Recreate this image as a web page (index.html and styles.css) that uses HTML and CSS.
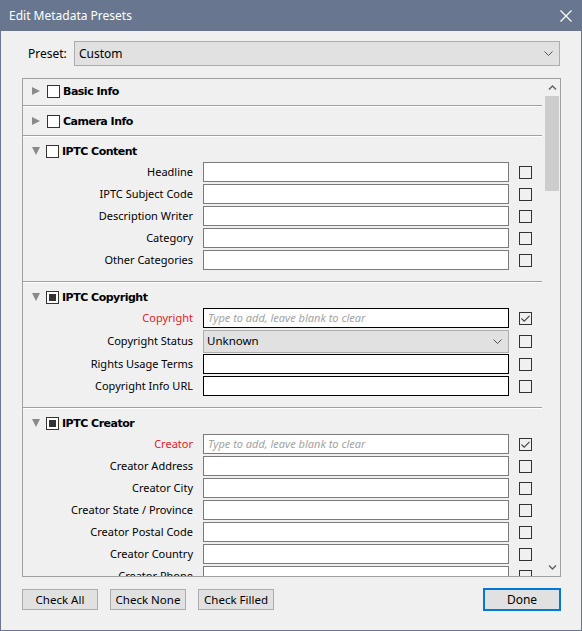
FILE: index.html
```html
<!DOCTYPE html>
<html>
<head>
<meta charset="utf-8">
<link rel="stylesheet" href="styles.css">
</head>
<body>
<div class="window">
  <div class="titlebar">
    <span class="title">Edit Metadata Presets</span>
    <svg class="close" width="12" height="12" viewBox="0 0 12 12"><path d="M0.5 0.5L11.5 11.5M11.5 0.5L0.5 11.5" stroke="#fff" stroke-width="1.2" fill="none"/></svg>
  </div>

  <div class="preset-row">
    <span class="preset-label">Preset:</span>
    <div class="select preset-select">
      <span>Custom</span>
      <svg class="chev" width="9" height="5" viewBox="0 0 9 5"><path d="M0.5 0.5L4.5 4.5L8.5 0.5" stroke="#555" fill="none"/></svg>
    </div>
  </div>

  <div class="panel">
    <div class="content">
      <div class="inner">
        <div class="sec">
          <div class="sec-head">
            <span class="tri-right"></span><span class="hbox"></span><span class="htext">Basic Info</span>
          </div>
        </div>
        <div class="sec">
          <div class="sec-head">
            <span class="tri-right"></span><span class="hbox"></span><span class="htext">Camera Info</span>
          </div>
        </div>
        <div class="sec open">
          <div class="sec-head">
            <span class="tri-down"></span><span class="hbox"></span><span class="htext">IPTC Content</span>
          </div>
          <div class="fields">
            <div class="row"><span class="lbl">Headline</span><span class="inp"></span><span class="cb"></span></div>
            <div class="row"><span class="lbl">IPTC Subject Code</span><span class="inp"></span><span class="cb"></span></div>
            <div class="row"><span class="lbl">Description Writer</span><span class="inp"></span><span class="cb"></span></div>
            <div class="row"><span class="lbl">Category</span><span class="inp"></span><span class="cb"></span></div>
            <div class="row"><span class="lbl">Other Categories</span><span class="inp"></span><span class="cb"></span></div>
          </div>
        </div>
        <div class="sec open">
          <div class="sec-head">
            <span class="tri-down"></span><span class="hbox mixed"></span><span class="htext">IPTC Copyright</span>
          </div>
          <div class="fields">
            <div class="row"><span class="lbl red">Copyright</span><span class="inp dark"><span class="ph">Type to add, leave blank to clear</span></span><span class="cb checked"><svg width="11" height="11" viewBox="0 0 11 11"><path d="M1.5 5.5L4.2 8.2L9.5 2.8" stroke="#444" stroke-width="1.1" fill="none"/></svg></span></div>
            <div class="row tall"><span class="lbl">Copyright Status</span><span class="select status"><span>Unknown</span><svg class="chev" width="9" height="5" viewBox="0 0 9 5"><path d="M0.5 0.5L4.5 4.5L8.5 0.5" stroke="#555" fill="none"/></svg></span><span class="cb"></span></div>
            <div class="row"><span class="lbl">Rights Usage Terms</span><span class="inp dark"></span><span class="cb"></span></div>
            <div class="row"><span class="lbl">Copyright Info URL</span><span class="inp dark"></span><span class="cb"></span></div>
          </div>
        </div>
        <div class="sec open">
          <div class="sec-head">
            <span class="tri-down"></span><span class="hbox mixed"></span><span class="htext">IPTC Creator</span>
          </div>
          <div class="fields">
            <div class="row"><span class="lbl red">Creator</span><span class="inp"><span class="ph">Type to add, leave blank to clear</span></span><span class="cb checked"><svg width="11" height="11" viewBox="0 0 11 11"><path d="M1.5 5.5L4.2 8.2L9.5 2.8" stroke="#444" stroke-width="1.1" fill="none"/></svg></span></div>
            <div class="row"><span class="lbl">Creator Address</span><span class="inp"></span><span class="cb"></span></div>
            <div class="row"><span class="lbl">Creator City</span><span class="inp"></span><span class="cb"></span></div>
            <div class="row"><span class="lbl">Creator State / Province</span><span class="inp"></span><span class="cb"></span></div>
            <div class="row"><span class="lbl">Creator Postal Code</span><span class="inp"></span><span class="cb"></span></div>
            <div class="row"><span class="lbl">Creator Country</span><span class="inp"></span><span class="cb"></span></div>
            <div class="row"><span class="lbl">Creator Phone</span><span class="inp"></span><span class="cb"></span></div>
          </div>
        </div>
      </div>
    </div>
    <div class="scrollbar">
      <div class="arrow"><svg width="9" height="5" viewBox="0 0 9 5"><path d="M1 4.5L4.5 1L8 4.5" stroke="#606060" stroke-width="1.4" fill="none"/></svg></div>
      <div class="track"><div class="thumb"></div></div>
      <div class="arrow"><svg width="9" height="5" viewBox="0 0 9 5"><path d="M1 0.5L4.5 4L8 0.5" stroke="#606060" stroke-width="1.4" fill="none"/></svg></div>
    </div>
  </div>

  <div class="buttons">
    <button class="btn">Check All</button>
    <button class="btn">Check None</button>
    <button class="btn">Check Filled</button>
    <span class="spacer"></span>
    <button class="btn done">Done</button>
  </div>
</div>
</body>
</html>
```

FILE: styles.css
```css
* { box-sizing: border-box; }
html, body { margin: 0; padding: 0; background: #f0f0f0; }
body {
  font-family: "Noto Sans", "Open Sans", sans-serif;
  font-size: 12px;
  color: #000;
}
.window {
  width: 582px;
  height: 631px;
  border: 1px solid #68778f;
  border-top: none;
  background: #f0f0f0;
  display: flex;
  flex-direction: column;
  overflow: hidden;
}
.titlebar {
  height: 31px;
  flex: none;
  margin: 0 -1px;
  background: #68778f;
  color: #fff;
  display: flex;
  align-items: center;
  padding: 0 10px 0 9px;
}
.title { flex: 1; font-size: 12px; }
.close { display: block; }

.preset-row {
  margin-top: 10px;
  height: 25px;
  display: flex;
  align-items: center;
  padding-left: 27px;
}
.preset-label { width: 46px; }
.select {
  background: #e1e1e1;
  border: 1px solid #adadad;
  display: flex;
  align-items: center;
  padding-left: 4px;
  padding-right: 6px;
}
.select span { flex: 1; }
.chev { display: block; }
.preset-select { width: 486px; height: 25px; }

.panel {
  margin-top: 12px;
  margin-left: 21px;
  width: 539px;
  height: 499px;
  border: 1px solid #a0a0a0;
  display: flex;
  flex: none;
}
.content { flex: 1; overflow: hidden; }
.inner { margin-top: -2px; }
.sec {
  border-bottom: 1px solid #a0a0a0;
  box-shadow: 0 1px 0 #fff;
  margin-right: 1px;
  margin-bottom: 1px;
}
.sec-head {
  height: 28px;
  display: flex;
  align-items: center;
  padding-left: 9px;
}
.sec.open .sec-head { height: 24px; padding-top: 4px; }
.sec.open { padding-bottom: 10px; }
.tri-right {
  width: 0; height: 0;
  border-top: 4.5px solid transparent;
  border-bottom: 4.5px solid transparent;
  border-left: 8px solid #8a8a8a;
  margin-right: 7px;
  margin-left: 0;
}
.tri-down {
  width: 0; height: 0;
  border-left: 4.5px solid transparent;
  border-right: 4.5px solid transparent;
  border-top: 8px solid #8a8a8a;
  margin-right: 6px;
}
.hbox {
  width: 13px; height: 13px;
  border: 1px solid #333;
  background: #fff;
  margin-right: 3px;
  display: flex;
  align-items: center;
  justify-content: center;
}
.hbox.mixed::after {
  content: "";
  width: 7px; height: 7px;
  background: #333;
}
.htext {
  font-family: "DejaVu Sans", sans-serif;
  font-weight: bold;
  font-size: 11px;
  letter-spacing: -0.5px;
}
.row {
  height: 22px;
  display: flex;
  align-items: center;
}
.row.tall { height: 24px; }
.lbl {
  width: 170px;
  text-align: right;
  margin-right: 10px;
  margin-top: -1px;
  white-space: nowrap;
  font-size: 11px;
}
.lbl.red { color: #e3202c; }
.inp {
  width: 306px;
  height: 20px;
  background: #fff;
  border: 1px solid #7a7a7a;
  display: flex;
  align-items: center;
  padding-left: 4px;
  overflow: hidden;
}
.inp.dark { border-color: #000; }
.ph {
  color: #a3a3a3;
  font-style: italic;
  white-space: nowrap;
  font-size: 11px;
  margin-top: -1px;
}
.status { width: 306px; height: 23px; padding-left: 3px; }
.status span { font-size: 11.5px; margin-top: -1px; }
.cb {
  width: 13px; height: 13px;
  border: 1px solid #333;
  margin-left: 10px;
  display: flex;
  align-items: center;
  justify-content: center;
}
.cb svg { display: block; }

.scrollbar {
  width: 17px;
  flex: none;
  display: flex;
  flex-direction: column;
  border-left: 1px solid #f0f0f0;
}
.arrow {
  height: 17px;
  display: flex;
  align-items: center;
  justify-content: center;
}
.track { flex: 1; padding: 0 1px; }
.thumb { height: 95px; background: #cdcdcd; }

.buttons {
  margin-top: 11px;
  padding-left: 21px;
  padding-right: 20px;
  display: flex;
  align-items: center;
  gap: 12px;
}
.btn {
  font-family: "Noto Sans", "Open Sans", sans-serif;
  font-size: 11.5px;
  width: 76px;
  height: 21px;
  background: #e1e1e1;
  border: 1px solid #adadad;
  padding: 0;
  color: #000;
}
.spacer { flex: 1; }
.btn.done {
  width: 78px;
  height: 23px;
  border: 2px solid #0078d7;
  font-size: 12px;
}
```
